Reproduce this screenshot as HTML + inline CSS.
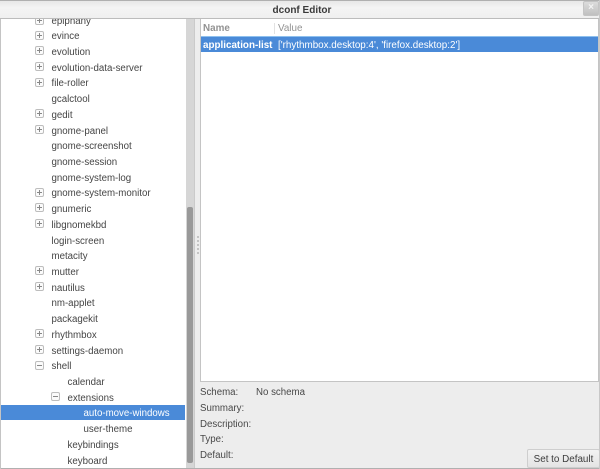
<!DOCTYPE html>
<html><head><meta charset="utf-8"><style>
html,body{margin:0;padding:0;width:600px;height:469px;overflow:hidden;background:#ededed}
body{position:relative;font-family:"Liberation Sans",sans-serif;font-size:9.85px;color:#444}
div{position:absolute;box-sizing:border-box;white-space:nowrap}
.r{height:16px;line-height:16px;margin-top:2px;margin-left:.5px;font-size:9.7px}
.e{width:9px;height:9px;border:1px solid #bdbdbd;border-radius:2px;background:#fbfbfb}
.e:before{content:"";position:absolute;left:1px;top:3px;width:5px;height:1px;background:#888}
.p:after{content:"";position:absolute;left:3px;top:1px;width:1px;height:5px;background:#888}
.l{left:200px;height:16px;line-height:16px;color:#484848;margin-top:2px;font-size:9.7px}
</style></head><body>
<div style="left:0;top:0;width:600px;height:19px;background:linear-gradient(#e8e8e8,#f4f4f4 40%,#efefef);border-top:1px solid #b0b0b0;border-bottom:1px solid #bcbcbc"></div>
<div style="left:2px;top:1px;width:600px;height:19px;line-height:19px;text-align:center;font-weight:bold;font-size:10px;color:#3a3a3a">dconf Editor</div>
<div style="left:583px;top:1px;width:16px;height:15px;background:linear-gradient(#dcdcdc,#c0c0c0);border:1px solid #c4c4c4;border-radius:2px;color:#f4f4f4;font-size:10px;line-height:12px;text-align:center;font-weight:bold">×</div>

<div style="left:1px;top:19px;width:185px;height:449px;background:#fff;overflow:hidden">
<div class="e p" style="left:34px;top:-3px"></div><div class="r" style="left:50px;top:-7px">epiphany</div>
<div class="e p" style="left:34px;top:12px"></div><div class="r" style="left:50px;top:8px">evince</div>
<div class="e p" style="left:34px;top:27px"></div><div class="r" style="left:50px;top:24px">evolution</div>
<div class="e p" style="left:34px;top:43px"></div><div class="r" style="left:50px;top:40px">evolution-data-server</div>
<div class="e p" style="left:34px;top:59px"></div><div class="r" style="left:50px;top:55px">file-roller</div>
<div class="r" style="left:50px;top:71px">gcalctool</div>
<div class="e p" style="left:34px;top:90px"></div><div class="r" style="left:50px;top:87px">gedit</div>
<div class="e p" style="left:34px;top:106px"></div><div class="r" style="left:50px;top:103px">gnome-panel</div>
<div class="r" style="left:50px;top:118px">gnome-screenshot</div>
<div class="r" style="left:50px;top:134px">gnome-session</div>
<div class="r" style="left:50px;top:150px">gnome-system-log</div>
<div class="e p" style="left:34px;top:169px"></div><div class="r" style="left:50px;top:165px">gnome-system-monitor</div>
<div class="e p" style="left:34px;top:184px"></div><div class="r" style="left:50px;top:181px">gnumeric</div>
<div class="e p" style="left:34px;top:200px"></div><div class="r" style="left:50px;top:197px">libgnomekbd</div>
<div class="r" style="left:50px;top:213px">login-screen</div>
<div class="r" style="left:50px;top:228px">metacity</div>
<div class="e p" style="left:34px;top:247px"></div><div class="r" style="left:50px;top:244px">mutter</div>
<div class="e p" style="left:34px;top:263px"></div><div class="r" style="left:50px;top:260px">nautilus</div>
<div class="r" style="left:50px;top:275px">nm-applet</div>
<div class="r" style="left:50px;top:291px">packagekit</div>
<div class="e p" style="left:34px;top:310px"></div><div class="r" style="left:50px;top:307px">rhythmbox</div>
<div class="e p" style="left:34px;top:326px"></div><div class="r" style="left:50px;top:323px">settings-daemon</div>
<div class="e" style="left:34px;top:342px"></div><div class="r" style="left:50px;top:338px">shell</div>
<div class="r" style="left:66px;top:354px">calendar</div>
<div class="e" style="left:50px;top:373px"></div><div class="r" style="left:66px;top:370px">extensions</div>
<div style="left:0;top:386px;width:184px;height:15px;background:#4a8ad8"></div>
<div class="r" style="left:82px;top:385px;color:#fff">auto-move-windows</div>
<div class="r" style="left:82px;top:401px">user-theme</div>
<div class="r" style="left:66px;top:417px">keybindings</div>
<div class="r" style="left:66px;top:433px">keyboard</div>
</div>

<div style="left:186px;top:19px;width:9px;height:450px;background:#d6d6d6;border-right:1px solid #cacaca"></div>
<div style="left:187px;top:207px;width:6px;height:256px;background:#999;border-radius:2px"></div>
<div style="left:197px;top:236px;width:2px;height:18px;background:repeating-linear-gradient(#c4c4c4 0 2px,transparent 2px 4px)"></div>

<div style="left:200px;top:19px;width:399px;height:363px;background:#fff;border:1px solid #c4c4c4;border-top:none"></div>
<div style="left:203px;top:21px;height:16px;line-height:16px;font-weight:bold;color:#929292">Name</div>
<div style="left:278px;top:21px;height:16px;line-height:16px;color:#929292">Value</div>
<div style="left:274px;top:23px;width:1px;height:11px;background:#e2e2e2"></div>
<div style="left:201px;top:36px;width:397px;height:16px;background:#4a8ad8;border-top:1px solid #8ec0ee"></div>
<div style="left:203px;top:38px;height:15px;line-height:15px;color:#fff;font-weight:bold">application-list</div>
<div style="left:278px;top:38px;height:15px;line-height:15px;color:#fff">['rhythmbox.desktop:4', 'firefox.desktop:2']</div>

<div class="l" style="top:383px">Schema:</div>
<div class="l" style="left:256px;top:383px">No schema</div>
<div class="l" style="top:399px">Summary:</div>
<div class="l" style="top:415px">Description:</div>
<div class="l" style="top:430px">Type:</div>
<div class="l" style="top:446px">Default:</div>

<div style="left:527px;top:449px;width:73px;height:19px;background:linear-gradient(#f2f2f2,#e4e4e4);border:1px solid #cecece;border-radius:2px;line-height:19px;text-align:center;color:#3c3c3c">Set to Default</div>
<div style="left:0;top:468px;width:600px;height:1px;background:#b0b0b0"></div>
<div style="left:0;top:19px;width:1px;height:450px;background:#c4c4c4"></div>
<div style="left:599px;top:0;width:1px;height:469px;background:#c8c8c8"></div>
</body></html>
